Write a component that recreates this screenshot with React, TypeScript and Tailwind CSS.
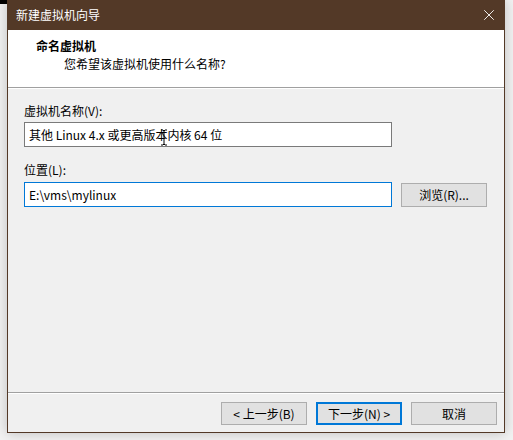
import { X } from 'lucide-react'

const uiFont = "font-['Microsoft_YaHei','Noto_Sans_CJK_SC','Noto_Sans',sans-serif]"

function DialogButton({ label, primary }: { label: string; primary?: boolean }) {
  return (
    <button
      type="button"
      className={
        primary
          ? 'flex h-[23px] w-[86px] items-center justify-center border-2 border-[#0078d7] bg-[#e1e1e1] text-[12px] text-black'
          : 'flex h-[23px] w-[86px] items-center justify-center border border-[#adadad] bg-[#e1e1e1] text-[12px] text-black'
      }
    >
      {label}
    </button>
  )
}

export default function App() {
  return (
    <div className={`relative h-[440px] w-[513px] overflow-hidden bg-[#f2f2f2] ${uiFont}`}>
      <div className="absolute left-0 top-0 h-[4px] w-[8px] bg-black" />

      <div className="relative ml-[7px] flex h-[433px] w-[498px] flex-col border-x border-b border-[#533927] bg-[#f0f0f0] shadow-[0_0_12px_rgba(0,0,0,0.22)]">
        {/* title bar */}
        <div className="-mx-px flex h-[30px] shrink-0 items-center justify-between bg-[#533927] pl-[9px] pr-[7px] text-[12px] text-white">
          <span>新建虚拟机向导</span>
          <X size={18} strokeWidth={1.2} className="text-white" />
        </div>

        {/* header */}
        <div className="h-[57px] shrink-0 bg-white pl-[28px] pt-[7px] text-[12px] leading-[18px] text-black">
          <div className="font-bold">命名虚拟机</div>
          <div className="pl-[28px]">您希望该虚拟机使用什么名称?</div>
        </div>
        <div className="h-px shrink-0 bg-[#a0a0a0]" />
        <div className="h-px shrink-0 bg-white" />

        {/* body */}
        <div className="flex-1 pl-[16px] pt-[13px] text-[12px] text-black">
          <div className="leading-[18px]">虚拟机名称(V):</div>
          <div className="mt-[2px] flex h-[25px] w-[368px] items-center border border-[#7a7a7a] bg-white pl-[4px]">
            <span>其他 Linux 4.x 或更高版本内核 64 位</span>
          </div>

          <div className="mt-[14px] leading-[18px]">位置(L):</div>
          <div className="mt-[3px] flex items-center gap-[9px]">
            <div className="flex h-[25px] w-[368px] items-center border border-[#0078d7] bg-white pl-[4px]">
              <span>E:\vms\mylinux</span>
            </div>
            <button
              type="button"
              className="flex h-[24px] w-[86px] items-center justify-center border border-[#adadad] bg-[#e1e1e1] text-[12px]"
            >
              浏览(R)...
            </button>
          </div>
        </div>

        {/* footer */}
        <div className="h-px shrink-0 bg-[#a0a0a0]" />
        <div className="h-px shrink-0 bg-white" />
        <div className="flex h-[38px] shrink-0 justify-end gap-[9px] pr-[7px] pt-[8px]">
          <DialogButton label="< 上一步(B)" />
          <DialogButton label="下一步(N) >" primary />
          <DialogButton label="取消" />
        </div>

        {/* text cursor over the name field */}
        <svg className="absolute left-[152px] top-[129px]" width="8" height="17" viewBox="0 0 8 17">
          <path d="M1 1h2l1 1 1-1h2M4 2v13M1 16h2l1-1 1 1h2" fill="none" stroke="#000" strokeWidth="1" />
        </svg>
      </div>
    </div>
  )
}
